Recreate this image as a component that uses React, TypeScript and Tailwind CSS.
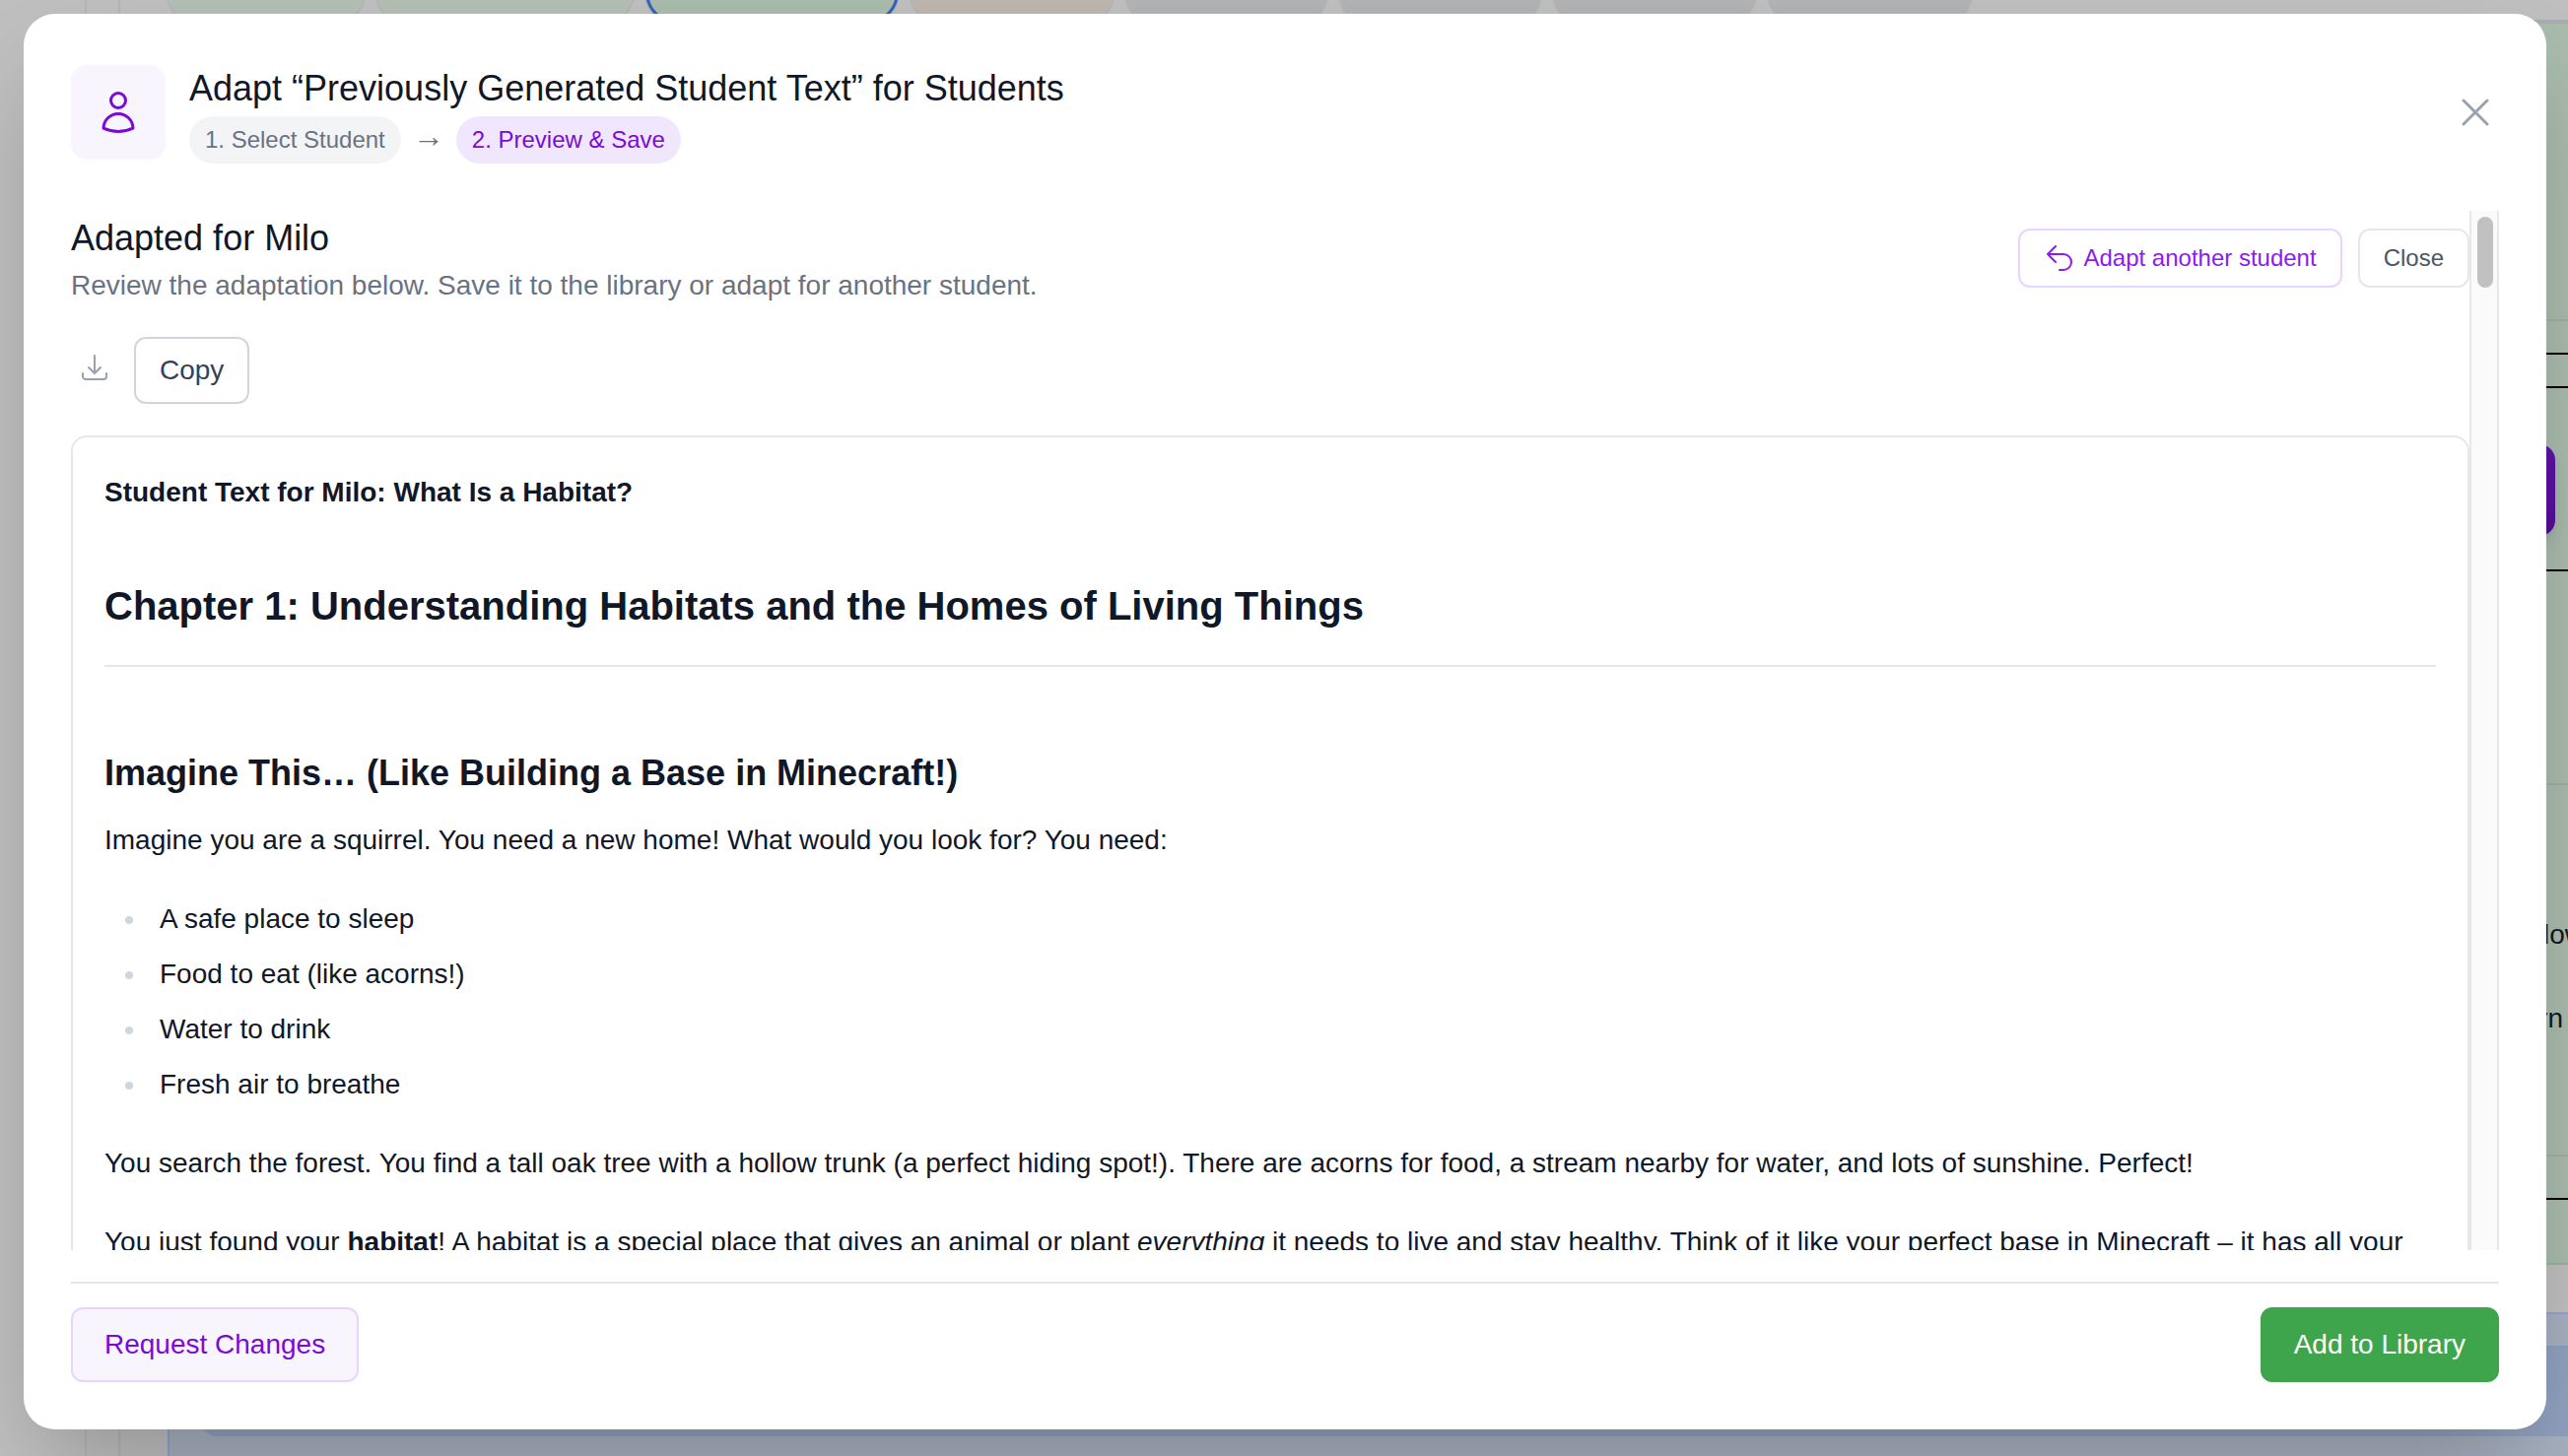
import React from 'react'
import { HiOutlineArrowDownTray, HiOutlineArrowUturnLeft, HiOutlineUser, HiOutlineXMark } from 'react-icons/hi2'

interface Tab {
  id: number,
  className: string
}

const tabs: Tab[] = [
  { id: 1, className: 'w-[200px] bg-[#b3beb5]' },
  { id: 2, className: 'w-[261px] bg-[#b3beb5]' },
  { id: 3, className: 'w-[257px] bg-[#a9bbad] border-3 border-[#3560bd]' },
  { id: 4, className: 'w-[206px] bg-[#bdb6ae]' },
  { id: 5, className: 'w-[205px] bg-[#b1b3b5]' },
  { id: 6, className: 'w-[205px] bg-[#b1b3b5]' },
  { id: 7, className: 'w-[206px] bg-[#b1b3b5]' },
  { id: 8, className: 'w-[207px] bg-[#b1b3b5]' }
]

const needs = [
  'A safe place to sleep',
  'Food to eat (like acorns!)',
  'Water to drink',
  'Fresh air to breathe'
]

const App = () => {
  return (
    <div className="relative h-[1478px] w-[2606px] overflow-hidden bg-[#bfbfbf] font-['Liberation_Sans',Arial,sans-serif] text-[#101828]">
      <Backdrop />
      <div className="absolute left-6 top-3.5 flex h-[1437px] w-[2560px] flex-col rounded-[32px] bg-white px-12 pt-[52px] shadow-[0_50px_100px_-24px_rgba(0,0,0,0.25)]">
        <div className="flex h-24 items-center justify-between">
          <div className="flex items-center gap-6">
            <div className="flex h-24 w-24 items-center justify-center rounded-2xl bg-[#f8f5ff] text-[#7a0bd4]">
              <HiOutlineUser className="h-12 w-12" />
            </div>
            <div className="flex h-[100px] flex-col gap-0.5">
              <h2 className="h-[52px] shrink-0 text-[36px] leading-[52px]">Adapt “Previously Generated Student Text” for Students</h2>
              <div className="flex h-12 shrink-0 items-center gap-4 text-[24px]">
                <span className="flex h-12 items-center rounded-full bg-[#f3f4f6] px-4 text-[#6a7282]">1. Select Student</span>
                <span className="flex h-12 w-6 items-center justify-center pb-2 text-[32px] text-[#6a7282]">→</span>
                <span className="flex h-12 items-center rounded-full bg-[#f0e6fd] px-4 text-[#7a0bd4]">2. Preview &amp; Save</span>
              </div>
            </div>
          </div>
          <HiOutlineXMark className="h-12 w-12 text-[#99a1af]" />
        </div>

        <div className="mt-[52px] flex h-[1055px] overflow-hidden">
          <div className="w-[2434px] shrink-0">
            <div className="flex items-start justify-between">
              <div>
                <h3 className="text-[36px] leading-[56px]">Adapted for Milo</h3>
                <p className="text-[28px] leading-[40px] text-[#6a7282]">Review the adaptation below. Save it to the library or adapt for another student.</p>
              </div>
              <div className="mt-[18px] flex gap-4 text-[24px]">
                <button className="flex h-[60px] items-center gap-2 rounded-xl border-2 border-[#e9d4ff] px-6 text-[#8c1af2]">
                  <HiOutlineArrowUturnLeft className="h-8 w-8" />
                  Adapt another student
                </button>
                <button className="flex h-[60px] items-center rounded-xl border-2 border-[#e5e7eb] px-6 text-[#4a5565]">Close</button>
              </div>
            </div>

            <div className="mt-8 flex items-center gap-6">
              <HiOutlineArrowDownTray className="mb-1.5 ml-2 h-8 w-8 text-[#99a1af]" />
              <button className="h-[68px] rounded-xl border-2 border-[#d1d5dc] px-6 text-[28px] text-[#364153]">Copy</button>
            </div>

            <div className="mt-8 rounded-2xl border-2 border-[#e5e7eb] px-8 pt-8 text-[28px]">
              <p className="font-bold leading-[48px]">Student Text for Milo: What Is a Habitat?</p>
              <h1 className="mt-[63px] border-b-2 border-[#e5e7eb] pb-8 text-[40px] font-bold leading-[56px]">Chapter 1: Understanding Habitats and the Homes of Living Things</h1>
              <h2 className="mt-20 text-[36px] font-bold leading-[56px]">Imagine This… (Like Building a Base in Minecraft!)</h2>
              <p className="mt-4 leading-[48px]">Imagine you are a squirrel. You need a new home! What would you look for? You need:</p>
              <ul className="mt-8 flex flex-col gap-2">
                {needs.map(need => (
                  <li key={need} className="flex items-center leading-[48px]">
                    <span className="ml-[21px] mr-[27px] mt-0.5 h-2 w-2 rounded-full bg-[#d1d5dc]" />
                    {need}
                  </li>
                ))}
              </ul>
              <p className="mt-8 leading-[48px]">You search the forest. You find a tall oak tree with a hollow trunk (a perfect hiding spot!). There are acorns for food, a stream nearby for water, and lots of sunshine. Perfect!</p>
              <p className="mt-8 leading-[48px]">You just found your <strong>habitat</strong>! A habitat is a special place that gives an animal or plant <em>everything</em> it needs to live and stay healthy. Think of it like your perfect base in Minecraft – it has all your</p>
            </div>
          </div>
          <div className="flex w-[30px] shrink-0 justify-center border-x-2 border-[#e8e8e8] bg-[#fafafa] pl-0.5 pt-1.5">
            <div className="h-[72px] w-4 rounded-full bg-[#c1c1c1]" />
          </div>
        </div>

        <div className="mt-8 flex justify-between border-t-2 border-[#e5e7eb] pt-6 text-[28px]">
          <button className="h-[76px] rounded-xl border-2 border-[#e9d4ff] bg-[#f8f5ff] px-8 text-[#7a0bd4]">Request Changes</button>
          <button className="h-[76px] rounded-xl border-2 border-[#3fa54c] bg-[#3fa54c] px-8 text-white">Add to Library</button>
        </div>
      </div>
    </div>
  )
}

export default App

// the page behind the dialog, only its edges show
const Backdrop = () => {
  return (
    <div className="absolute inset-0">
      <div className="absolute left-[86px] top-0 h-full w-9 border-x-2 border-[#b2b4b6]" />
      <div className="absolute left-[170px] -top-[56px] flex gap-3">
        {tabs.map(tab => <div key={tab.id} className={`h-20 rounded-[32px] shadow-sm ${tab.className}`} />)}
      </div>
      <div className="absolute right-0 top-5 h-[1264px] w-[120px] border-b-2 border-t-4 border-b-[#8fb898] border-t-[#a9acb0] bg-[#a9bbad]">
        <div className="absolute top-[300px] h-0.5 w-full bg-[#a5a8ac]" />
        <div className="absolute top-[334px] h-9 w-full border-y-2 border-black" />
        <div className="absolute left-0 top-[427px] h-[93px] w-[107px] rounded-2xl bg-linear-to-b from-[#6012a8] to-[#540a96] shadow-lg" />
        <div className="absolute top-[554px] h-0.5 w-full bg-black" />
        <div className="absolute top-[771px] h-0.5 w-full bg-[#a5a8ac]" />
        <p className="absolute left-[95px] top-[905px] text-[28px] leading-[40px]">low</p>
        <p className="absolute right-[5px] top-[990px] text-[28px] leading-[40px]">rn</p>
        <div className="absolute top-[1148px] h-0.5 w-full bg-[#a5a8ac]" />
        <div className="absolute top-[1192px] h-0.5 w-full bg-black" />
      </div>
      <div className="absolute left-[170px] right-0 top-[1332px] h-[160px] border-l-2 border-t-2 border-[#8fa5cf] bg-[#a7b0c0]">
        <div className="ml-8 mt-8 h-[92px] rounded-bl-2xl bg-[#90a1bf]" />
      </div>
    </div>
  )
}
